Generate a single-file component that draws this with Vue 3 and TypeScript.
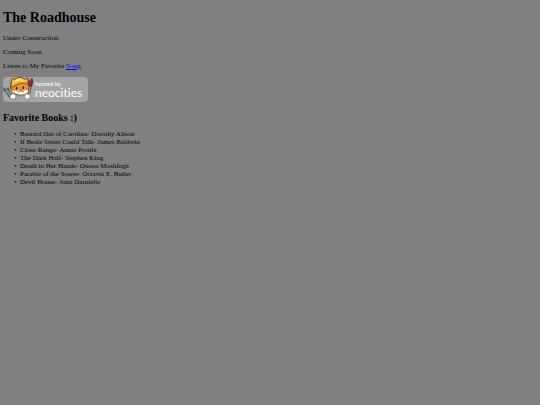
<script setup lang="ts">
const notices: string[] = ['Under Construction', 'Coming Soon']

const books: string[] = [
  'Bastard Out of Carolina- Dorothy Alison',
  'If Beale Street Could Talk- James Baldwin',
  'Close Range- Annie Proulx',
  'The Dark Half- Stephen King',
  'Death in Her Hands- Otessa Moshfegh',
  'Parable of the Sower- Octavia E. Butler',
  'Devil House- John Darnielle',
]
</script>

<template>
  <main class="page">
    <h1>The Roadhouse</h1>
    <p v-for="notice in notices" :key="notice">{{ notice }}</p>
    <p>Listen to My Favorite <a class="song" href="#song">Song</a>.</p>

    <a class="badge" href="#neocities">
      <svg class="cat" viewBox="0 0 90 75" aria-hidden="true">
        <!-- wrench -->
        <path d="M3 32 L3 41 L10 46 L17 57 L25 66 L32 60 L21 47 L17 40 L15 32 L11 39 L7 38 Z" fill="#8e9498" stroke="#33383b" stroke-width="2.5" />
        <!-- head -->
        <path d="M23 26 L28 10 L36 17 L64 16 L75 7 L77 26 L80 35 Q79 50 65 53 Q49 57 34 50 Q22 44 23 26 Z" fill="#f08f35" stroke="#42301e" stroke-width="2.5" />
        <path d="M25 38 Q36 40 43 43 L52 36 L60 42 Q70 39 78 36 Q77 49 64 52 Q48 55 35 49 Q27 45 25 38 Z" fill="#fff6e7" />
        <!-- helmet -->
        <path d="M24 22 L27 5 L36 7 Q42 1 50 1 Q59 1 64 7 L74 3 L75 19 L79 23 Q65 18 53 19 L29 30 Q22 30 24 22 Z" fill="#f2c04a" stroke="#584019" stroke-width="2.5" />
        <path d="M34 16 Q38 5 50 5 Q58 6 63 11 Q47 9 34 16 Z" fill="#fbdc7c" />
        <path d="M30 26 Q47 14 73 18" fill="none" stroke="#d48b22" stroke-width="3" />
        <!-- face -->
        <ellipse cx="41" cy="34" rx="2.5" ry="4" fill="#302018" />
        <ellipse cx="61" cy="32" rx="2.5" ry="4" fill="#302018" />
        <path d="M50 38 H56 L53 41 Z M53 41 Q49 47 45 43 M53 41 Q57 47 62 42" fill="none" stroke="#4a2c1c" stroke-width="2" />
        <path d="M27 39 L34 40 M71 38 L79 35" stroke="#5f432b" stroke-width="2" />
        <!-- brush -->
        <path d="M80 23 L86 24 L79 57 L74 55 Z" fill="#c99e65" stroke="#403126" stroke-width="2" />
        <path d="M78 18 Q80 9 87 4 Q91 11 88 20 L86 28 L79 26 Z" fill="#a32135" stroke="#401f23" stroke-width="2" />
        <!-- paws -->
        <circle cx="30" cy="59" r="9" fill="#fff" stroke="#6b5945" stroke-width="2" />
        <circle cx="73" cy="59" r="9" fill="#fff" stroke="#6b5945" stroke-width="2" />
        <path d="M28 62 V67 M33 61 V66 M71 62 V67 M76 61 V66" stroke="#9b8a75" stroke-width="1.5" />
      </svg>
      <span class="words">
        <span class="hosted">hosted by</span>
        <span class="brand">neocities</span>
      </span>
    </a>

    <h2>Favorite Books :)</h2>
    <ul>
      <li v-for="book in books" :key="book">{{ book }}</li>
    </ul>
  </main>
</template>

<style>
body {
  background: #808080;
}
</style>

<style scoped>
.page {
  padding: 10px 3px;
  color: #000;
  font-family: "Liberation Serif", "Times New Roman", serif;
  font-size: 7px;
  line-height: 8px;
}

h1 {
  margin: 0 0 8px;
  font-size: 14px;
  line-height: 16px;
}

p {
  margin: 0 0 6px;
}

.song {
  color: #0000ee;
}

.badge {
  display: flex;
  width: fit-content;
  margin-top: 7px;
  padding-right: 6px;
  border-radius: 4px;
  background: #a5a5a5;
  color: #fff;
  text-decoration: none;
}

.cat {
  width: 30px;
  height: 25px;
  overflow: visible;
}

.words {
  display: flex;
  flex-direction: column;
  padding: 3px 0 0 2px;
  font-family: Lato, "Open Sans", sans-serif;
  font-variant-ligatures: none;
  white-space: nowrap;
}

.hosted {
  font-size: 6px;
  line-height: 7px;
}

.brand {
  font-size: 12px;
  line-height: 12px;
}

h2 {
  margin: 10px 0 6px;
  font-size: 10px;
  line-height: 12px;
}

ul {
  margin: 0;
  padding-left: 17px;
  list-style-type: "•\a0\a0 ";
}
</style>
